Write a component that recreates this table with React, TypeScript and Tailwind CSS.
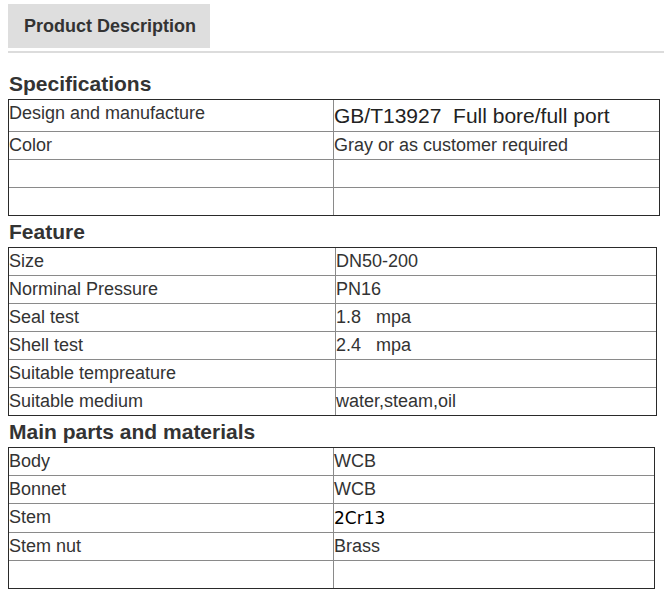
import React from "react";

type Row = { l: string; r: string; h: string; big?: boolean; mono?: boolean };

function Table({ rows, w, lw }: { rows: Row[]; w: string; lw: string }) {
  return (
    <div className={`border border-[#2a2a2a] ${w}`}>
      {rows.map((row, i) => (
        <div key={i} className={`flex ${row.h} ${i > 0 ? "border-t border-[#8a8a8a]" : ""}`}>
          <div className={`${lw} shrink-0 border-r border-[#8a8a8a] text-[18px] leading-[27px] text-[#333] whitespace-pre`}>
            {row.l}
          </div>
          <div
            className={`flex-1 whitespace-pre ${
              row.big
                ? "text-[21px] leading-[31px] text-[#222]"
                : row.mono
                ? "text-[17px] leading-[28px] text-black font-['DejaVu_Sans',sans-serif]"
                : "text-[18px] leading-[27px] text-[#333]"
            }`}
          >
            {row.r}
          </div>
        </div>
      ))}
    </div>
  );
}

function Heading({ children, className = "" }: { children: React.ReactNode; className?: string }) {
  return (
    <div className={`pl-px h-[31px] text-[21px] leading-[31px] font-bold text-[#333] ${className}`}>{children}</div>
  );
}

export default function App() {
  return (
    <div className="w-[664px] h-[597px] bg-white font-['Liberation_Sans',Arial,sans-serif] pl-[8px] overflow-hidden">
      <div className="mt-[4px] h-[44px] w-[202px] bg-[#dedede] pl-[16px] text-[18px] font-bold leading-[44px] text-[#333]">
        Product Description
      </div>
      <div className="mt-[3px] h-[2px] bg-[#dcdcdc]" />
      <Heading className="mt-[15px]">Specifications</Heading>
      <Table
        w="w-[652px]"
        lw="w-[325px]"
        rows={[
          { l: "Design and manufacture", r: "GB/T13927  Full bore/full port", h: "h-[31px]", big: true },
          { l: "Color", r: "Gray or as customer required", h: "h-[28px]" },
          { l: "", r: "", h: "h-[28px]" },
          { l: "", r: "", h: "h-[28px]" },
        ]}
      />
      <Heading>Feature</Heading>
      <Table
        w="w-[649px]"
        lw="w-[327px]"
        rows={[
          { l: "Size", r: "DN50-200", h: "h-[27px]" },
          { l: "Norminal Pressure", r: "PN16", h: "h-[28px]" },
          { l: "Seal test", r: "1.8   mpa", h: "h-[28px]" },
          { l: "Shell test", r: "2.4   mpa", h: "h-[28px]" },
          { l: "Suitable tempreature", r: "", h: "h-[28px]" },
          { l: "Suitable medium", r: "water,steam,oil", h: "h-[28px]" },
        ]}
      />
      <Heading>Main parts and materials</Heading>
      <Table
        w="w-[647px]"
        lw="w-[325px]"
        rows={[
          { l: "Body", r: "WCB", h: "h-[27px]" },
          { l: "Bonnet", r: "WCB", h: "h-[28px]" },
          { l: "Stem", r: "2Cr13", h: "h-[29px]", mono: true },
          { l: "Stem nut", r: "Brass", h: "h-[28px]" },
          { l: "", r: "", h: "h-[28px]" },
        ]}
      />
    </div>
  );
}
